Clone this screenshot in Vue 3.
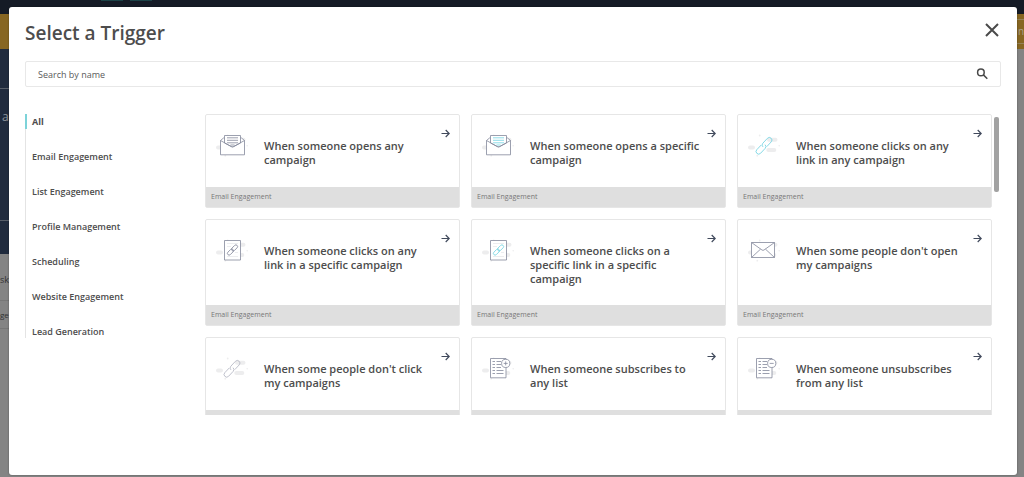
<script setup>
import { ref } from 'vue'

const search = ref('')
const categories = [
  'All',
  'Email Engagement',
  'List Engagement',
  'Profile Management',
  'Scheduling',
  'Website Engagement',
  'Lead Generation',
]
const active = ref('All')

const triggers = [
  { title: 'When someone opens any campaign', icon: 'open', tone: 'slate' },
  { title: 'When someone opens a specific campaign', icon: 'open', tone: 'teal' },
  { title: 'When someone clicks on any link in any campaign', icon: 'link', tone: 'teal' },
  { title: 'When someone clicks on any link in a specific campaign', icon: 'doc', tone: 'slate' },
  { title: 'When someone clicks on a specific link in a specific campaign', icon: 'doc', tone: 'teal' },
  { title: "When some people don't open my campaigns", icon: 'closed', tone: 'slate' },
  { title: "When some people don't click my campaigns", icon: 'link', tone: 'pale' },
  { title: 'When someone subscribes to any list', icon: 'list', tone: 'plus' },
  { title: 'When someone unsubscribes from any list', icon: 'list', tone: 'minus' },
]
</script>

<template>
  <div class="app">
    <div class="backdrop" aria-hidden="true">
      <div class="topbar"><span class="chip"></span><span class="chip"></span></div>
      <div class="notice"><span class="notice-button">n</span></div>
      <div class="columns">
        <div class="side">
          <div class="navy">
            <div class="navy-head"></div>
            <div class="navy-body">a</div>
          </div>
          <div class="task">sk</div>
          <div class="task small">ge</div>
        </div>
      </div>
    </div>

    <section class="modal" role="dialog" aria-labelledby="dialog-title">
      <header class="head">
        <h1 id="dialog-title">Select a Trigger</h1>
        <button class="close" type="button" aria-label="Close">
          <svg width="14" height="14" viewBox="0 0 14 14"><path d="M1 1 13 13M13 1 1 13" /></svg>
        </button>
      </header>

      <div class="search">
        <input v-model="search" type="text" aria-label="Search by name" placeholder="Search by name" />
        <button type="button" aria-label="Search">
          <svg width="12" height="12" viewBox="0 0 12 12"><circle cx="4.9" cy="4.4" r="3.3" /><path d="M7.4 6.9 11.3 10.8" /></svg>
        </button>
      </div>

      <div class="content">
        <nav class="categories" aria-label="Categories">
          <button
            v-for="name in categories"
            :key="name"
            type="button"
            :class="{ active: name === active }"
            @click="active = name"
          >{{ name }}</button>
        </nav>

        <div class="results">
          <div class="grid">
            <button v-for="t in triggers" :key="t.title" class="card" type="button">
              <span class="card-body">
                <svg class="icon" :class="t.tone" width="36" height="26" viewBox="0 0 36 26" aria-hidden="true">
                  <g class="blobs">
                    <rect x="1" y="13.5" width="7" height="4" rx="2" />
                    <rect x="20" y="5.7" width="10.5" height="4" rx="2" />
                    <rect x="19.3" y="16" width="10" height="4" rx="2" />
                    <circle cx="12.7" cy="3.5" r=".9" />
                    <circle cx="32.2" cy="13.7" r=".8" />
                    <circle cx="10.3" cy="23.7" r=".9" />
                  </g>
                  <template v-if="t.icon === 'open'">
                    <path class="line" d="M5.5 8.5 8.5 6H26.5L29.5 8.5V22.8H5.5Z" />
                    <path class="line" d="M9.5 11V3.5H25.5V11L18.6 14.6Q17.5 15.2 16.4 14.6Z" />
                    <path class="line open-line" d="M5.5 8.5 16.4 14.6Q17.5 15.2 18.6 14.6L29.5 8.5" />
                    <path class="accent" d="M12 5.8H23M12 8.3H23M12 10.8H23M15.5 13H19.5" />
                  </template>
                  <g v-else-if="t.icon === 'link'" class="accent" transform="rotate(-47 17 13.8)">
                    <path d="M15.6 11.2H9.2A2.6 2.6 0 0 0 9.2 16.4H16A2.6 2.6 0 0 0 18.5 13.8" />
                    <path d="M18.4 16.4H24.8A2.6 2.6 0 0 0 24.8 11.2H18A2.6 2.6 0 0 0 15.5 13.8" />
                  </g>
                  <template v-else-if="t.icon === 'doc'">
                    <path class="line" d="M9.5 3.5H25.5V23H9.5Z" />
                    <path class="rules" d="M12 6.5H23M12 9.5H16M20 15.5H23M12 19.5H23" />
                    <g class="accent" transform="rotate(-45 17.5 13)">
                      <rect x="11" y="11.3" width="7.2" height="3.4" rx="1.7" />
                      <rect x="16.8" y="11.3" width="7.2" height="3.4" rx="1.7" />
                    </g>
                  </template>
                  <template v-else-if="t.icon === 'closed'">
                    <path class="line" d="M4.5 5.5H27.5V20.5H4.5Z" />
                    <path class="line open-line" d="M4.5 5.5 15 13Q16 13.7 17 13L27.5 5.5M4.5 20.5 13.5 12.2M27.5 20.5 18.5 12.2" />
                  </template>
                  <template v-else>
                    <path class="line" d="M9.5 3.5H25V22.8H9.5Z" />
                    <path class="line" d="M11.5 6.5H14M15.5 6.5H20M11.5 9.5H14M15.5 9.5H20M11.5 12.5H14M15.5 12.5H20M11.5 15.5H14M15.5 15.5H22.5M11.5 18.5H14M15.5 18.5H22.5" />
                    <circle class="line" cx="24.7" cy="8.4" r="4.1" />
                    <path class="line" :d="t.tone === 'plus' ? 'M22.7 8.4H26.7M24.7 6.4V10.4' : 'M22.7 8.4H26.7'" />
                  </template>
                </svg>
                <span class="card-title">{{ t.title }}</span>
                <svg class="arrow" width="9" height="9" viewBox="0 0 9 9" aria-hidden="true"><path d="M.5 4.5H8M4.7 1 8.2 4.5 4.7 8" /></svg>
              </span>
              <span class="card-foot">Email Engagement</span>
            </button>
          </div>
          <div class="track"><div class="thumb"></div></div>
        </div>
      </div>
    </section>
  </div>
</template>

<style>
body {
  margin: 0;
}
</style>

<style scoped>
.app {
  position: relative;
  display: flex;
  box-sizing: border-box;
  height: 100vh;
  padding: 7px 7px 2px 9px;
  overflow: hidden;
  background: #848484;
  color: #4d4d4d;
  font-family: "Open Sans", "Noto Sans", sans-serif;
}
.backdrop {
  position: absolute;
  inset: 0;
}
.topbar {
  display: flex;
  gap: 7px;
  box-sizing: border-box;
  height: 14px;
  padding-left: 101px;
  background: #151b26;
}
.chip {
  width: 22px;
  height: 1px;
  background: #1c4347;
}
.notice {
  display: flex;
  justify-content: flex-end;
  box-sizing: border-box;
  height: 35px;
  padding: 5px 0;
  background: #876622;
}
.notice-button {
  width: 7px;
  border: solid #94825a;
  border-width: 1px 0;
  color: #aaa08a;
  font-size: 10px;
  line-height: 23px;
  text-indent: 1px;
}
.side {
  width: 9px;
  overflow: hidden;
  white-space: nowrap;
}
.navy {
  height: 205px;
  background: #202b3e;
}
.navy-head {
  height: 39px;
  border-bottom: 1px solid #585f6a;
}
.navy-body {
  height: 131px;
  padding-left: 2px;
  border-bottom: 1px solid #585f6a;
  color: #8f949c;
  font-size: 12px;
  line-height: 56px;
}
.task {
  height: 46px;
  border-bottom: 1px solid #777;
  color: #333;
  font-size: 9px;
  line-height: 52px;
}
.task.small {
  height: 27px;
  font-size: 8px;
  line-height: 28px;
}
.modal {
  position: relative;
  display: flex;
  flex: 1;
  flex-direction: column;
  min-width: 0;
  padding: 0 16px;
  border-radius: 3px;
  background: #fff;
  box-shadow: 0 0 2px rgba(0, 0, 0, 0.4);
}
button {
  margin: 0;
  padding: 0;
  border: 0;
  background: none;
  color: inherit;
  font-family: inherit;
  text-align: left;
  cursor: pointer;
}
svg {
  display: block;
  fill: none;
}
.head {
  display: flex;
  align-items: center;
  justify-content: space-between;
  height: 52px;
  padding-bottom: 2px;
}
h1 {
  margin: 0;
  font-size: 19px;
  font-weight: 600;
  line-height: 24px;
}
.close {
  margin: 0 2px 6px 0;
}
.close path {
  stroke: #4a4a4a;
  stroke-width: 2;
}
.search {
  display: flex;
  align-items: center;
  height: 24px;
  padding: 0 12px;
  border: 1px solid #e8e8e8;
  border-radius: 2px;
}
.search input {
  flex: 1;
  min-width: 0;
  padding: 0;
  border: 0;
  outline: 0;
  background: none;
  color: #4a4a4a;
  font-family: inherit;
  font-size: 9px;
}
.search input::placeholder {
  color: #5a5a5a;
  opacity: 1;
}
.search svg {
  stroke: #4a4a4a;
  stroke-width: 1.5;
}
.content {
  display: flex;
  flex: 1;
  align-items: stretch;
  min-height: 0;
  padding: 27px 0 60px;
}
.categories {
  display: flex;
  flex: 0 0 180px;
  flex-direction: column;
  align-items: flex-start;
  gap: 20px;
  height: calc(100% - 77px);
  overflow: hidden;
  background: linear-gradient(#e4e4e4, #e4e4e4) left / 1px 100% no-repeat;
}
.categories button {
  flex: none;
  padding-left: 7px;
  font-size: 9px;
  font-weight: 600;
  line-height: 15px;
}
.categories .active {
  padding-left: 5px;
  border-left: 2px solid #7dd3d9;
  font-weight: 700;
}
.results {
  display: flex;
  flex: 1;
  gap: 2px;
  min-width: 0;
}
.grid {
  display: grid;
  flex: 1;
  grid-template-columns: repeat(3, minmax(0, 1fr));
  grid-auto-rows: max-content;
  gap: 11px;
  align-content: start;
  height: 100%;
  overflow: hidden;
}
.card {
  display: flex;
  flex-direction: column;
  border: 1px solid #e6e6e6;
  border-radius: 2px;
}
.card-body {
  display: flex;
  flex: 1;
  box-sizing: border-box;
  width: 100%;
  min-height: 72px;
  padding: 0 9px;
}
.icon {
  flex: none;
  margin: 17px 13px 0 0;
}
.blobs {
  fill: #ededee;
}
.line,
.accent {
  fill: #fff;
  stroke: #83889b;
  stroke-width: 0.8;
}
.open-line {
  fill: none;
}
.accent {
  fill: none;
}
.teal .accent {
  stroke: #72d3e2;
}
.pale .accent {
  stroke: #b4b7c3;
}
.rules {
  stroke: #e4e5e8;
  stroke-width: 0.7;
}
.card-title {
  flex: 1;
  padding: 24px 0 19px;
  font-size: 11px;
  font-weight: 600;
  line-height: 14px;
}
.arrow {
  flex: none;
  margin: 14px 0 0 5px;
  stroke: #414a5c;
  stroke-width: 1.2;
}
.card-foot {
  box-sizing: border-box;
  width: 100%;
  padding: 0 5px;
  background: #dfdfdf;
  color: #777;
  font-size: 7px;
  line-height: 20px;
}
.track {
  width: 7px;
  padding-top: 3px;
}
.thumb {
  width: 5px;
  height: 25%;
  border-radius: 2px;
  background: #a2a2a2;
}
</style>
